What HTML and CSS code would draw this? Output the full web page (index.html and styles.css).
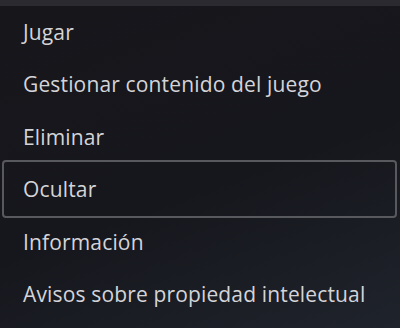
FILE: index.html
```html
<!DOCTYPE html>
<html lang="es">
<head>
  <meta charset="UTF-8">
  <meta name="viewport" content="width=device-width, initial-scale=1">
  <title>Opciones</title>
  <link rel="stylesheet" href="styles.css">
</head>
<body>

<div class="top-bar"></div>

<ul class="menu">
  <li class="menu-item">Jugar</li>
  <li class="menu-item">Gestionar contenido del juego</li>
  <li class="menu-item">Eliminar</li>
  <li class="menu-item focused">Ocultar</li>
  <li class="menu-item">Información</li>
  <li class="menu-item">Avisos sobre propiedad intelectual</li>
</ul>

</body>
</html>
```

FILE: styles.css
```css
html, body {
  height: 100%;
}

body {
  margin: 0;
  padding: 0;
  font-family: 'Open Sans', 'Noto Sans', sans-serif;
  background: linear-gradient(160deg, #17161b 0%, #16171d 55%, #1f232b 100%);
  color: #d4d4d8;
  overflow: hidden;
}

.top-bar {
  height: 5.5px;
  background-color: #2a2a30;
}

.menu {
  list-style: none;
  margin: 0;
  padding: 0 3px 0 2px;
}

.menu-item {
  height: 52.6px;
  line-height: 52.6px;
  padding-left: 21px;
  font-size: 21px;
  letter-spacing: 0.15px;
  white-space: nowrap;
}

.menu-item.focused {
  position: relative;
}

.menu-item.focused::after {
  content: "";
  position: absolute;
  top: -3px;
  bottom: -2px;
  left: 0;
  right: 0;
  border: 2px solid #58585f;
  border-radius: 4px;
}
```
